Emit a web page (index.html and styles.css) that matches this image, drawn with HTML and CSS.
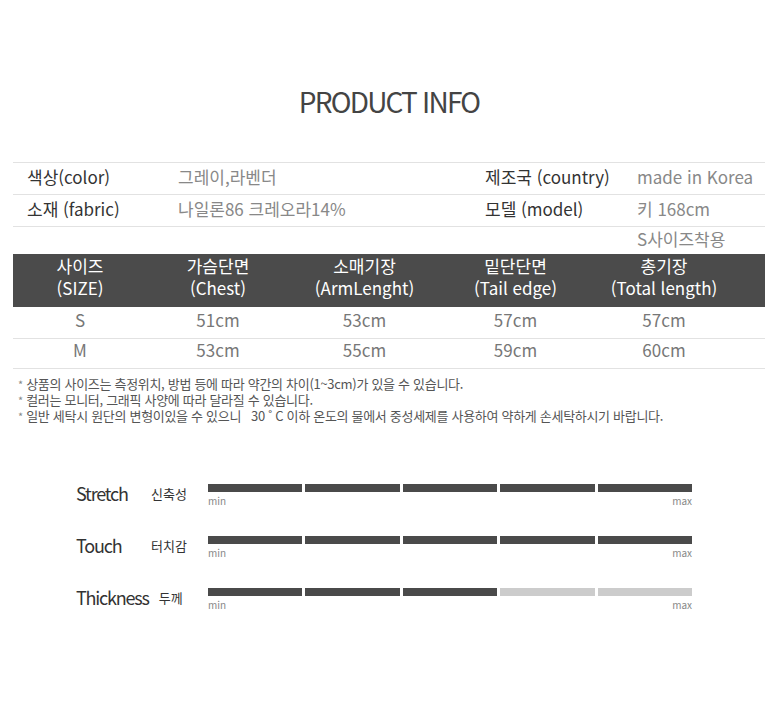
FILE: index.html
```html
<!DOCTYPE html>
<html lang="ko">
<head>
<meta charset="utf-8">
<title>PRODUCT INFO</title>
<link rel="stylesheet" href="styles.css">
</head>
<body>
<div class="page">
  <h1 class="title">PRODUCT INFO</h1>

  <div class="info">
    <div class="info-row">
      <div class="lab first">색상(color)</div>
      <div class="val">그레이,라벤더</div>
      <div class="lab">제조국 (country)</div>
      <div class="val">made in Korea</div>
    </div>
    <div class="info-row">
      <div class="lab first">소재 (fabric)</div>
      <div class="val">나일론86 크레오라14%</div>
      <div class="lab">모델 (model)</div>
      <div class="val">키 168cm</div>
    </div>
    <div class="info-row last">
      <div class="lab first"></div>
      <div class="val"></div>
      <div class="lab"></div>
      <div class="val">S사이즈착용</div>
    </div>
  </div>

  <div class="size">
    <div class="size-head">
      <div class="c">사이즈<br>(SIZE)</div>
      <div class="c">가슴단면<br>(Chest)</div>
      <div class="c">소매기장<br>(ArmLenght)</div>
      <div class="c">밑단단면<br>(Tail edge)</div>
      <div class="c lastc">총기장<br>(Total length)</div>
    </div>
    <div class="size-row">
      <div class="c">S</div>
      <div class="c">51cm</div>
      <div class="c">53cm</div>
      <div class="c">57cm</div>
      <div class="c lastc">57cm</div>
    </div>
    <div class="size-row m">
      <div class="c">M</div>
      <div class="c">53cm</div>
      <div class="c">55cm</div>
      <div class="c">59cm</div>
      <div class="c lastc">60cm</div>
    </div>
  </div>

  <div class="notes">
    <p><span class="ast">*</span> 상품의 사이즈는 측정위치, 방법 등에 따라 약간의 차이(1~3cm)가 있을 수 있습니다.</p>
    <p><span class="ast">*</span> 컬러는 모니터, 그래픽 사양에 따라 달라질 수 있습니다.</p>
    <p><span class="ast">*</span> 일반 세탁시 원단의 변형이있을 수 있으니 &nbsp; 30 ˚ C 이하 온도의 물에서 중성세제를 사용하여 약하게 손세탁하시기 바랍니다.</p>
  </div>

  <div class="scales">
    <div class="scale">
      <div class="names"><span class="en">Stretch</span><span class="ko">신축성</span></div>
      <div class="track">
        <div class="segs"><i class="on"></i><i class="on"></i><i class="on"></i><i class="on"></i><i class="on"></i></div>
        <div class="ends"><span>min</span><span>max</span></div>
      </div>
    </div>
    <div class="scale">
      <div class="names"><span class="en">Touch</span><span class="ko">터치감</span></div>
      <div class="track">
        <div class="segs"><i class="on"></i><i class="on"></i><i class="on"></i><i class="on"></i><i class="on"></i></div>
        <div class="ends"><span>min</span><span>max</span></div>
      </div>
    </div>
    <div class="scale">
      <div class="names"><span class="en">Thickness</span><span class="ko">두께</span></div>
      <div class="track">
        <div class="segs"><i class="on"></i><i class="on"></i><i class="on"></i><i></i><i></i></div>
        <div class="ends"><span>min</span><span>max</span></div>
      </div>
    </div>
  </div>
</div>
</body>
</html>
```

FILE: styles.css
```css
* { box-sizing: border-box; }
html, body { margin: 0; padding: 0; background: #fff; }
body {
  font-family: "Noto Sans CJK KR", "Noto Sans", sans-serif;
  color: #333;
  width: 780px;
}
.page {
  margin-left: 13px;
  width: 752px;
}
.title {
  margin: 0;
  padding-top: 79px;
  height: 162px;
  line-height: 44px;
  font-size: 28px;
  font-weight: 400;
  letter-spacing: -1.8px;
  text-align: center;
  color: #444;
}
.info {
  border-top: 1px solid #e2e2e2;
}
.info-row {
  display: grid;
  grid-template-columns: 165px 307px 152px 128px;
  height: 32px;
  padding-bottom: 4px;
  border-bottom: 1px solid #e2e2e2;
  align-items: center;
  font-size: 17px;
  line-height: 22px;
}
.info-row.last {
  border-bottom: none;
  height: 27px;
  padding-bottom: 0;
  align-items: start;
  padding-top: 1px;
}
.lab { color: #333; }
.lab.first { padding-left: 14px; }
.val { color: #888; }
.size-head {
  display: grid;
  grid-template-columns: 134px 142px 151px 151px 174px;
  height: 53px;
  padding-bottom: 7px;
  background: #4b4b4b;
  color: #fff;
  align-items: center;
  font-size: 17px;
  line-height: 22px;
}
.c { text-align: center; }
.c.lastc { padding-right: 28px; }
.size-row {
  display: grid;
  grid-template-columns: 134px 142px 151px 151px 174px;
  height: 32px;
  padding-bottom: 5px;
  border-bottom: 1px solid #e2e2e2;
  align-items: center;
  font-size: 17px;
  line-height: 22px;
  color: #777;
}
.size-row.m { height: 30px; padding-bottom: 7px; }
.notes {
  margin-top: 7px;
  padding-left: 5px;
  font-size: 13px;
  line-height: 16px;
  color: #555;
  letter-spacing: -0.3px;
}
.notes p { margin: 0; }
.ast { color: #888; font-size: 11px; }
.scales {
  margin-top: 60px;
  padding-left: 63px;
}
.scale {
  display: flex;
  align-items: flex-start;
  height: 52px;
}
.names {
  width: 132px;
  display: flex;
  align-items: center;
  height: 19px;
  line-height: 19px;
}
.en {
  min-width: 65px;
  margin-right: 10px;
  font-size: 18px;
  letter-spacing: -1.2px;
  color: #333;
}
.ko {
  font-size: 13px;
  color: #333;
}
.track {
  width: 484px;
}
.segs {
  display: flex;
  gap: 3px;
  height: 8px;
}
.segs i {
  flex: 1;
  background: #cccccc;
}
.segs i.on { background: #4a4a4a; }
.ends {
  display: flex;
  justify-content: space-between;
  margin-top: 3px;
  font-size: 10px;
  line-height: 12px;
  color: #888;
}
```
